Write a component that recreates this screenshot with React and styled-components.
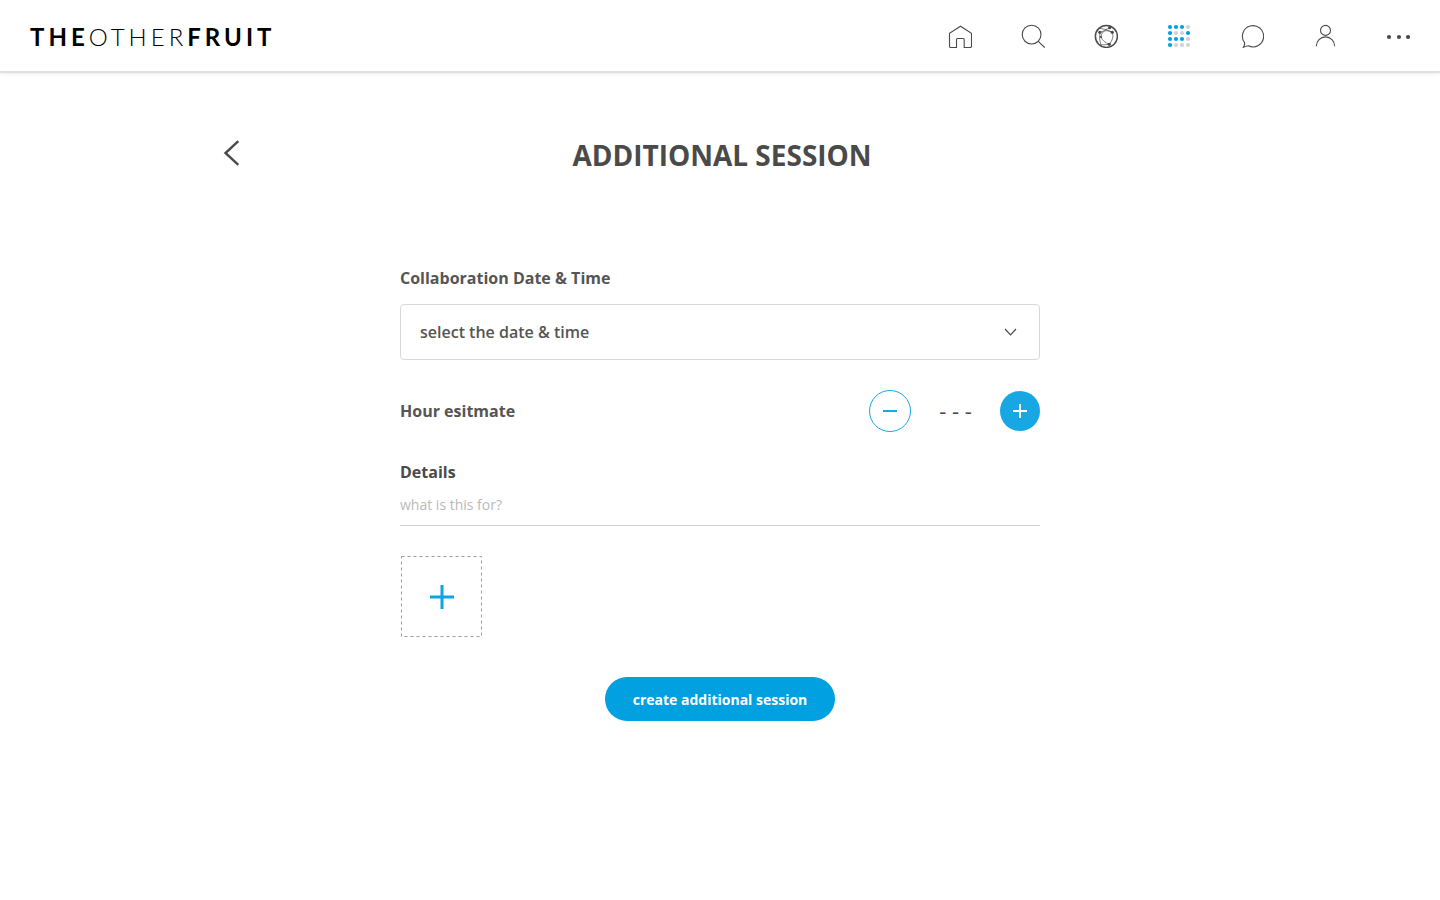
import React from "react";
import styled, { createGlobalStyle } from "styled-components";

const GlobalStyle = createGlobalStyle`
  *, *::before, *::after { box-sizing: border-box; }
  body {
    margin: 0;
    background: #fff;
    color: #4a4a4a;
    font-family: "Open Sans", "Noto Sans", sans-serif;
  }
  button, input, select { font-family: inherit; }
  svg { display: block; }
`;

const Header = styled.header`
  display: flex;
  align-items: center;
  justify-content: space-between;
  height: 73px;
  padding: 1px 30px 0;
  border-bottom: 2px solid #e0e0e0;
  box-shadow: 0 1px 3px rgba(0, 0, 0, 0.08);
`;

const Wordmark = styled.a`
  padding-top: 2px;
  color: #000;
  font-family: Lato, sans-serif;
  font-size: 24px;
  line-height: 32px;
  font-weight: 300;
  letter-spacing: 4px;
  text-decoration: none;

  b { font-weight: 700; }
`;

const Nav = styled.nav`
  display: flex;
  gap: 49px;
`;

const NavLink = styled.a`
  display: block;
  color: #4a4a4a;
`;

const Icon = styled.svg`
  width: ${(p) => p.$size || 24}px;
  height: ${(p) => p.$size || 24}px;
  fill: none;
  stroke: currentColor;
  stroke-width: ${(p) => p.$stroke || 1.1};
`;

const Page = styled.main`
  max-width: 1000px;
  margin: 0 auto;
  padding-top: 61px;
`;

const TitleBar = styled.div`
  display: grid;
  grid-template-columns: 24px 1fr 20px;
  align-items: center;
`;

const BackButton = styled.button`
  padding: 0 0 4px;
  border: 0;
  background: none;
  color: #4a4a4a;
  cursor: pointer;
`;

const Title = styled.h1`
  margin: 0;
  font-size: 28px;
  line-height: 42px;
  font-weight: 700;
  text-align: center;
  text-transform: uppercase;
`;

const Form = styled.form`
  display: flex;
  flex-direction: column;
  max-width: 640px;
  margin: 0 auto;
  padding-top: 90px;
`;

const Label = styled.label`
  font-size: 16px;
  line-height: 24px;
  font-weight: 700;
  color: ${(p) => (p.$strong ? "#4a4a4a" : "#555")};
`;

const SelectBox = styled.div`
  position: relative;
  margin-top: 14px;

  svg {
    position: absolute;
    right: 20px;
    top: 20px;
    pointer-events: none;
  }
`;

const Select = styled.select`
  width: 100%;
  height: 56px;
  padding: 0 19px;
  appearance: none;
  border: 1px solid #d8d8d8;
  border-radius: 4px;
  background: #fff;
  color: #555;
  font-size: 16px;
  font-weight: 600;
`;

const EstimateRow = styled.div`
  display: flex;
  align-items: center;
  justify-content: space-between;
  margin-top: 30px;
`;

const Stepper = styled.div`
  display: flex;
  align-items: center;
`;

const RoundButton = styled.button`
  display: grid;
  place-items: center;
  width: ${(p) => (p.$filled ? 40 : 42)}px;
  height: ${(p) => (p.$filled ? 40 : 42)}px;
  padding: 0;
  border: ${(p) => (p.$filled ? "0" : "1px solid #17a8e3")};
  border-radius: 50%;
  background: ${(p) => (p.$filled ? "#17a8e3" : "#fff")};
  color: ${(p) => (p.$filled ? "#fff" : "#17a8e3")};
  cursor: pointer;
`;

const Amount = styled.output`
  width: 89px;
  padding-bottom: 2px;
  font-size: 22px;
  line-height: 30px;
  text-align: center;
`;

const Details = styled.div`
  display: flex;
  flex-direction: column;
  margin-top: 28px;
`;

const TextInput = styled.input`
  height: 42px;
  padding: 0;
  border: 0;
  border-bottom: 1px solid #d3d3d3;
  font-size: 14px;
  color: #4a4a4a;

  &::placeholder { color: #bababa; opacity: 1; font-weight: 400; }
`;

const UploadButton = styled.button`
  align-self: flex-start;
  margin-top: 29px;
  padding: 0;
  border: 0;
  background: none;
  color: #9b9b9b;
  cursor: pointer;
`;

const SubmitButton = styled.button`
  align-self: center;
  height: 44px;
  margin-top: 39px;
  padding: 0 28px;
  border: 0;
  border-radius: 22px;
  background: #00a0e1;
  color: #fff;
  font-size: 14px;
  font-weight: 700;
  cursor: pointer;
`;

const GRID_DOTS = ["1110", "1001", "1110", "1000"];

const NAV_ITEMS = [
  {
    label: "Home",
    art: <path d="M8.5 23.5H2.8Q1.5 23.5 1.5 22.2V9.3L12.5 2.2L23.5 9.3V22.2Q23.5 23.5 22.2 23.5H16.2V15.6Q16.2 14.5 15.1 14.5H9.6Q8.5 14.5 8.5 15.6Z" />,
  },
  {
    label: "Search",
    art: <><circle cx="10.6" cy="10.6" r="9.4" /><path d="M17.3 17.3L23.7 23.6" /></>,
  },
  {
    label: "Network",
    art: (
      <>
        <circle cx="12.4" cy="12.4" r="11" strokeWidth="1.5" />
        <g strokeWidth="0.7">
          <path d="M5 4.2Q11 4.6 18.3 8.3M15.7 3.7Q7 7.5 7 13Q9 18 15.3 20.3M5.8 8.3Q13 5 18.3 8.3Q20.5 14 15.3 20.3M5.8 8.3Q4.8 15 7 21.5M15.3 20.3Q11 21 6.5 20.8" />
        </g>
        <g fill="currentColor" stroke="none">
          <circle cx="15.7" cy="3.7" r="1.6" />
          <circle cx="5.8" cy="8.3" r="1.6" />
          <circle cx="18.3" cy="8.3" r="1.6" />
          <circle cx="7" cy="13" r="1.1" />
          <circle cx="15.3" cy="20.3" r="1.6" />
        </g>
      </>
    ),
  },
  {
    label: "Collaborations",
    art: GRID_DOTS.flatMap((row, y) =>
      [...row].map((on, x) => (
        <circle key={`${x}-${y}`} cx={3 + x * 6} cy={3 + y * 6} r="2.1" stroke="none" fill={on === "1" ? "#00a0e1" : "#d0d3d6"} />
      ))
    ),
  },
  {
    label: "Messages",
    art: <path d="M4.6 18.7A10.6 10.6 0 1 1 8.4 21.8Q6 22.3 3.4 23.3Q4.9 21 4.6 18.7Z" />,
  },
  {
    label: "Profile",
    art: <><circle cx="12.5" cy="6.4" r="5" /><path d="M3.3 22.3A9.2 9.4 0 0 1 21.7 22.3" /></>,
  },
  {
    label: "More",
    art: (
      <g fill="currentColor" stroke="none">
        <circle cx="3" cy="13" r="2.1" /><circle cx="13" cy="13" r="2.1" /><circle cx="22" cy="13" r="2.1" />
      </g>
    ),
  },
];

export default function App() {
  return (
    <>
      <GlobalStyle />
      <Header>
        <Wordmark href="#"><b>THE</b>OTHER<b>FRUIT</b></Wordmark>
        <Nav aria-label="Main">
          {NAV_ITEMS.map((item) => (
            <NavLink key={item.label} href="#" aria-label={item.label}>
              <Icon viewBox="0 0 24 24">{item.art}</Icon>
            </NavLink>
          ))}
        </Nav>
      </Header>

      <Page>
        <TitleBar>
          <BackButton type="button" aria-label="Back">
            <Icon viewBox="0 0 24 24" $stroke={2.4} overflow="visible"><path d="M18.3 0.2L5.5 12L18.3 23.8" /></Icon>
          </BackButton>
          <Title>Additional session</Title>
        </TitleBar>

        <Form onSubmit={(e) => e.preventDefault()}>
          <Label htmlFor="when">Collaboration Date &amp; Time</Label>
          <SelectBox>
            <Select id="when" defaultValue="">
              <option value="">select the date &amp; time</option>
            </Select>
            <Icon viewBox="0 0 16 16" $size={16} $stroke={1.2}><path d="M1 5L6.5 10.8L12 5" /></Icon>
          </SelectBox>

          <EstimateRow>
            <Label htmlFor="hours">Hour esitmate</Label>
            <Stepper>
              <RoundButton type="button" aria-label="Fewer hours">
                <Icon viewBox="0 0 14 14" $size={14} $stroke={2}><path d="M0 7H14" /></Icon>
              </RoundButton>
              <Amount id="hours">- - -</Amount>
              <RoundButton type="button" $filled aria-label="More hours">
                <Icon viewBox="0 0 14 14" $size={14} $stroke={2}><path d="M0 7H14M7 0V14" /></Icon>
              </RoundButton>
            </Stepper>
          </EstimateRow>

          <Details>
            <Label htmlFor="details" $strong>Details</Label>
            <TextInput id="details" placeholder="what is this for?" />
          </Details>

          <UploadButton type="button" aria-label="Add attachment">
            <Icon viewBox="0 0 83 83" $size={83} $stroke={1}>
              <rect x="1.5" y="1.5" width="80" height="80" strokeDasharray="3 3" />
              <path d="M30 42H54M42 30V54" stroke="#0ea3e2" strokeWidth="3" />
            </Icon>
          </UploadButton>

          <SubmitButton type="submit">create additional session</SubmitButton>
        </Form>
      </Page>
    </>
  );
}
